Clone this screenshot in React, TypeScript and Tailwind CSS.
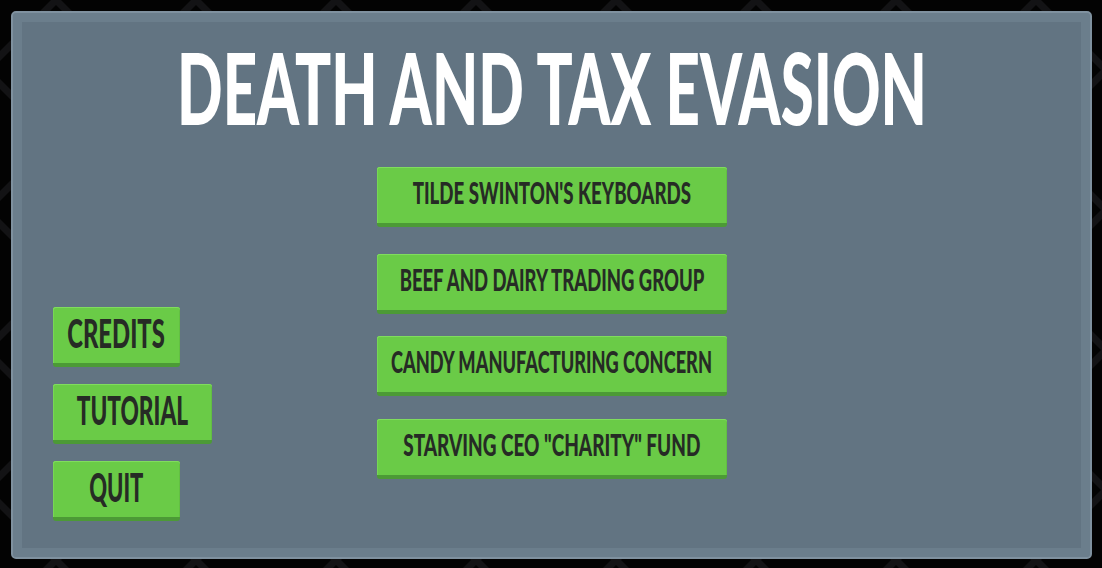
import React from "react";

const FONT = "font-['Lato','Liberation_Sans',sans-serif] font-black";

type BtnProps = { label: string; className?: string; text?: string; squeeze?: string };

function MenuButton({
  label,
  className = "",
  text = "text-[31px]",
  squeeze = "scale-x-[0.6]",
}: BtnProps) {
  return (
    <button
      className={`flex h-[60px] min-w-0 items-center justify-center rounded-[3px] border-b-4 border-[#4c9a36] bg-[#6acb47] pb-[5px] shadow-[inset_0_1px_0_#80dd5d,inset_1px_0_0_#77d655,inset_-1px_0_0_#62bf42] ${className}`}
    >
      <span
        className={`${FONT} ${text} ${squeeze} inline-block whitespace-nowrap uppercase leading-none text-[#262b25]`}
      >
        {label}
      </span>
    </button>
  );
}

function Backdrop() {
  return (
    <svg className="absolute inset-0 h-full w-full" aria-hidden="true">
      <defs>
        <pattern id="lattice" width="140" height="140" patternUnits="userSpaceOnUse" x="-14" y="0">
          <path d="M0 70 L70 0 L140 70 L70 140 Z" fill="none" stroke="#131315" strokeWidth="7" />
        </pattern>
      </defs>
      <rect width="100%" height="100%" fill="#030303" />
      <rect width="100%" height="100%" fill="url(#lattice)" />
    </svg>
  );
}

export default function App() {
  return (
    <div className="relative flex h-[568px] w-[1102px] overflow-hidden bg-black pb-[9px] pl-[11px] pr-[10px] pt-[11px]">
      <Backdrop />
      <div className="relative flex min-w-0 flex-1 flex-col rounded-[5px] border-2 border-[#7f919f] bg-[#627482] shadow-[inset_0_0_0_9px_#6b7e8c]">
        <h1 className="mt-[23px] flex min-w-0 justify-center">
          <span
            className={`${FONT} inline-block scale-x-[0.6] whitespace-nowrap text-[100px] leading-none text-white`}
          >
            DEATH AND TAX EVASION
          </span>
        </h1>

        <div className="grid min-w-0 flex-1 grid-cols-[minmax(0,1fr)_350px_minmax(0,1fr)]">
          <div className="flex flex-col justify-end gap-[17px] pb-[36px] pl-[40px]">
            <MenuButton label="Credits" className="w-[127px]" text="text-[40px]" squeeze="scale-x-[0.595]" />
            <MenuButton label="Tutorial" className="w-[159px]" text="text-[40px]" squeeze="scale-x-[0.566]" />
            <MenuButton label="Quit" className="w-[127px]" text="text-[40px]" squeeze="scale-x-[0.55]" />
          </div>

          <div className="flex flex-col pt-[31px]">
            <MenuButton label="Tilde Swinton's Keyboards" squeeze="scale-x-[0.603]" />
            <MenuButton label="Beef and Dairy Trading Group" className="mt-[27px]" squeeze="scale-x-[0.595]" />
            <MenuButton label="Candy Manufacturing Concern" className="mt-[22px]" squeeze="scale-x-[0.587]" />
            <MenuButton label={'Starving CEO "Charity" Fund'} className="mt-[23px]" squeeze="scale-x-[0.612]" />
          </div>

          <div />
        </div>
      </div>
    </div>
  );
}
